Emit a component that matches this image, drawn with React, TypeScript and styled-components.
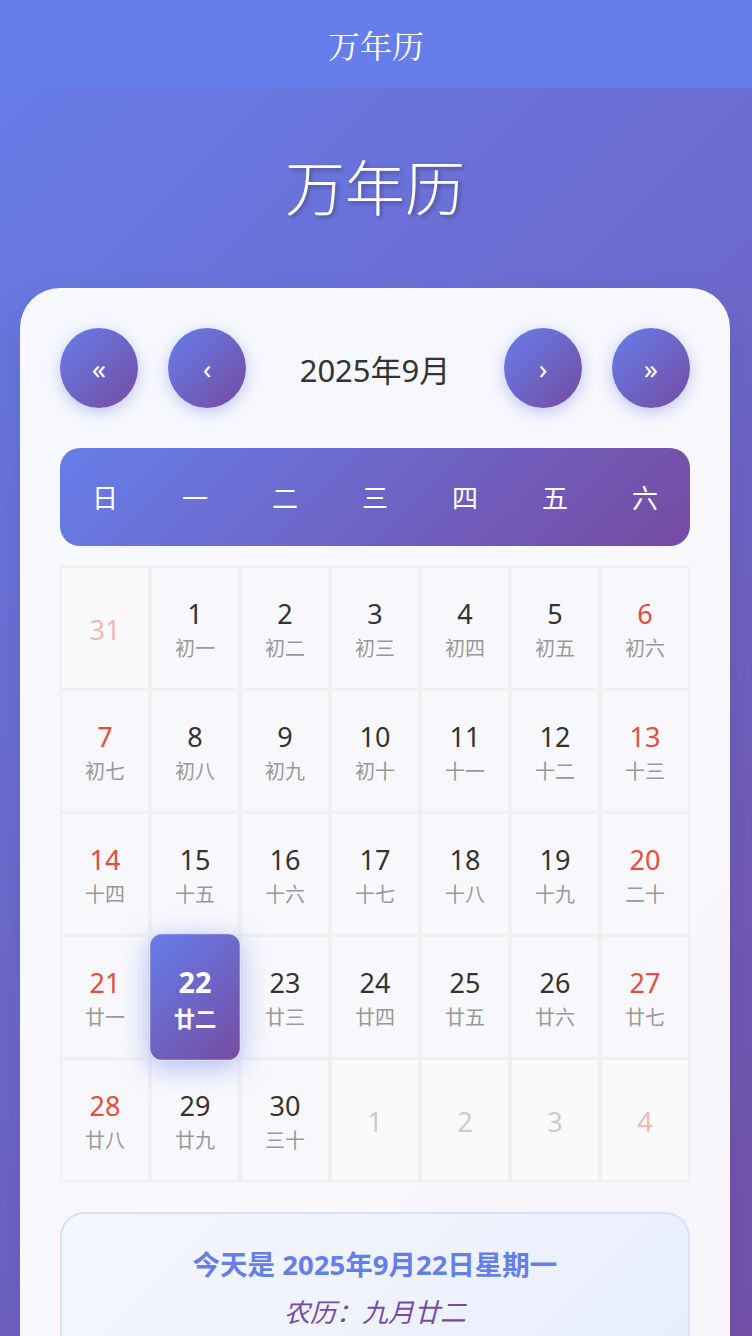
import React from 'react';
import styled, { createGlobalStyle } from 'styled-components';

const GlobalStyle = createGlobalStyle`
  * {
    box-sizing: border-box;
  }

  body {
    margin: 0;
    min-height: 100vh;
    font-family: "Noto Sans", "Noto Sans CJK SC", sans-serif;
    background: linear-gradient(135deg, #667eea 0%, #764ba2 100%);
    color: #333;
  }
`;

const TopBar = styled.header`
  display: flex;
  justify-content: center;
  align-items: center;
  height: 88px;
  background: #667eea;
  color: #fff;
  font-family: "Noto Serif CJK SC", serif;
  font-size: 32px;
`;

const Page = styled.main`
  max-width: 750px;
  padding: 0 20px 230px;
`;

const Title = styled.h1`
  margin: 0;
  padding: 64px 0 64px;
  text-align: center;
  color: #fff;
  font-size: 60px;
  font-weight: 300;
  line-height: 1.2;
  text-shadow: 2px 2px 4px rgba(0, 0, 0, 0.3);
`;

const Card = styled.section`
  padding: 40px;
  border-radius: 40px;
  background: rgba(255, 255, 255, 0.95);
  box-shadow: 0 20px 40px rgba(0, 0, 0, 0.1);
`;

const Nav = styled.div`
  display: flex;
  justify-content: space-between;
  align-items: center;
  margin-bottom: 40px;
`;

const NavGroup = styled.div`
  display: flex;
  gap: 30px;
`;

const NavButton = styled.button`
  display: flex;
  justify-content: center;
  align-items: center;
  width: 78px;
  height: 80px;
  padding: 0;
  border: none;
  border-radius: 50%;
  background: linear-gradient(135deg, #667eea 0%, #764ba2 100%);
  color: #fff;
  font-family: "Noto Sans", sans-serif;
  font-size: 28px;
  box-shadow: 0 4px 15px rgba(102, 126, 234, 0.4);
  cursor: pointer;
`;

const MonthLabel = styled.div`
  font-size: 31px;
  color: #333;
`;

const WeekBar = styled.div`
  display: grid;
  grid-template-columns: repeat(7, 1fr);
  align-items: center;
  height: 98px;
  margin-bottom: 20px;
  border-radius: 20px;
  background: linear-gradient(135deg, #667eea 0%, #764ba2 100%);
`;

const WeekName = styled.div`
  text-align: center;
  color: #fff;
  font-size: 26px;
`;

const Grid = styled.div`
  display: grid;
  grid-template-columns: repeat(7, 1fr);
  grid-auto-rows: 120px;
  column-gap: 4px;
  row-gap: 3px;
  padding: 2px;
  background: #f0f0f0;
`;

const Day = styled.div<{ $other?: boolean; $today?: boolean; $weekend?: boolean }>`
  position: relative;
  display: flex;
  flex-direction: column;
  justify-content: center;
  align-items: center;
  gap: 6px;
  padding-top: 3px;
  background: ${(p) => (p.$other ? '#fafafa' : '#f8f8fc')};
  color: ${(p) =>
    p.$today
      ? '#fff'
      : p.$other
        ? p.$weekend
          ? 'rgba(236, 90, 90, 0.45)'
          : '#ccc'
        : p.$weekend
          ? '#e74c3c'
          : '#333'};

  ${(p) =>
    p.$today &&
    `
    z-index: 1;
    border: 1px solid rgba(255, 255, 255, 0.75);
    border-radius: 12px;
    background: linear-gradient(135deg, #667eea 0%, #764ba2 100%);
    box-shadow: 0 6px 26px rgba(102, 126, 234, 0.5);
    transform: scale(1.065);
    font-weight: bold;
  `}
`;

const DayNum = styled.span`
  font-size: 27px;
  line-height: 1.25;
`;

const Lunar = styled.span<{ $today?: boolean }>`
  font-size: 20px;
  line-height: 1.3;
  color: ${(p) => (p.$today ? '#fff' : '#999')};
`;

const TodayBox = styled.div`
  margin-top: 30px;
  padding: 32px 20px 30px;
  border: 2px solid #d8e1f8;
  border-radius: 25px;
  background: linear-gradient(135deg, #f5f7ff 0%, #e8eefc 100%);
  text-align: center;
`;

const TodayLine = styled.div`
  font-size: 27.5px;
  font-weight: bold;
  line-height: 1.4;
  color: #667eea;
`;

const LunarLine = styled.div`
  margin-top: 9px;
  font-size: 26px;
  font-style: italic;
  line-height: 1.4;
  color: #764ba2;
`;

const weekNames = ['日', '一', '二', '三', '四', '五', '六'];
const digits = ['一', '二', '三', '四', '五', '六', '七', '八', '九', '十'];

function lunarName(d: number): string {
  if (d <= 10) return '初' + digits[d - 1];
  if (d < 20) return '十' + digits[d - 11];
  if (d === 20) return '二十';
  if (d < 30) return '廿' + digits[d - 21];
  return '三十';
}

interface Cell {
  day: number;
  other: boolean;
}

const cells: Cell[] = [
  { day: 31, other: true },
  ...Array.from({ length: 30 }, (_, i) => ({ day: i + 1, other: false })),
  ...[1, 2, 3, 4].map((d) => ({ day: d, other: true })),
];

const TODAY = 22;

const App: React.FC = () => {
  return (
    <>
      <GlobalStyle />
      <TopBar>万年历</TopBar>
      <Page>
        <Title>万年历</Title>
        <Card>
          <Nav>
            <NavGroup>
              <NavButton>«</NavButton>
              <NavButton>‹</NavButton>
            </NavGroup>
            <MonthLabel>2025年9月</MonthLabel>
            <NavGroup>
              <NavButton>›</NavButton>
              <NavButton>»</NavButton>
            </NavGroup>
          </Nav>

          <WeekBar>
            {weekNames.map((w) => (
              <WeekName key={w}>{w}</WeekName>
            ))}
          </WeekBar>

          <Grid>
            {cells.map((c, i) => {
              const col = i % 7;
              const weekend = col === 0 || col === 6;
              const today = !c.other && c.day === TODAY;
              return (
                <Day key={i} $other={c.other} $weekend={weekend} $today={today}>
                  <DayNum>{c.day}</DayNum>
                  {!c.other && <Lunar $today={today}>{lunarName(c.day)}</Lunar>}
                </Day>
              );
            })}
          </Grid>

          <TodayBox>
            <TodayLine>今天是 2025年9月22日星期一</TodayLine>
            <LunarLine>农历：九月廿二</LunarLine>
          </TodayBox>
        </Card>
      </Page>
    </>
  );
};

export default App;
